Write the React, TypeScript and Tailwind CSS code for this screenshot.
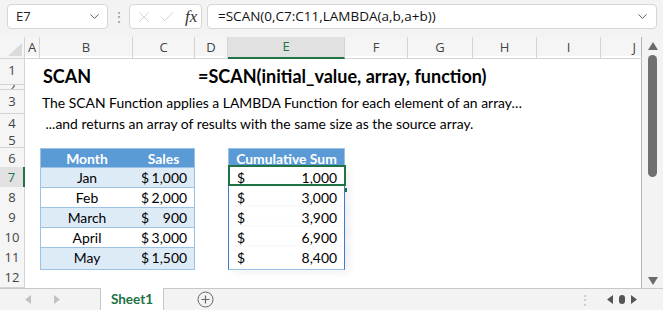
import React from "react";
import { ChevronDown, X, Check } from "lucide-react";

const cols =
  "grid grid-cols-[25px_15px_93px_62px_33px_117px_63px_65px_64px_64px_41px]";

const cellFont = "font-['Lato',_sans-serif] text-[13.9px] text-black";
const uiFont = "font-['Open_Sans',_sans-serif]";

const salesRows = [
  { n: 7, month: "Jan", sales: "1,000", sum: "1,000", band: true },
  { n: 8, month: "Feb", sales: "2,000", sum: "3,000", band: false },
  { n: 9, month: "March", sales: "900", sum: "3,900", band: true },
  { n: 10, month: "April", sales: "3,000", sum: "6,900", band: false },
  { n: 11, month: "May", sales: "1,500", sum: "8,400", band: true },
];

const RowHeader = ({ n, active }: { n: number; active?: boolean }) => (
  <div
    className={
      active
        ? `${uiFont} flex items-center justify-center border-b border-[#d4d4d4] border-r-2 border-r-[#217346] bg-[#e1e1e1] text-[13px] text-[#217346] leading-none overflow-hidden`
        : `${uiFont} flex items-center justify-center border-b border-r border-[#d4d4d4] bg-[#f5f5f5] text-[13px] text-[#444] leading-none overflow-hidden`
    }
  >
    {n}
  </div>
);

const FormulaBar = () => (
  <div className="flex h-[37px] items-start pt-[4px] bg-[#f3f3f3]">
    <div className="ml-[7px] flex h-[25px] w-[101px] items-center justify-between rounded-[4px] border border-[#d6d6d6] bg-white pl-[8px] pr-[5px]">
      <span className={`${uiFont} text-[13px] text-[#222]`}>E7</span>
      <ChevronDown size={15} strokeWidth={1.5} className="text-[#555]" />
    </div>
    <div className="flex h-[25px] w-[21px] items-center justify-center text-[#999] text-[14px]">
      ⋮
    </div>
    <div className="flex h-[25px] w-[73px] items-center rounded-[4px] border border-[#d6d6d6] bg-white pl-[5px]">
      <X size={18} strokeWidth={1} className="text-[#c4c4c4]" />
      <Check size={18} strokeWidth={1} className="ml-[5px] text-[#c4c4c4]" />
      <span className="ml-[9px] font-['Liberation_Serif',_serif] italic text-[17px] text-[#333] leading-none">
        fx
      </span>
    </div>
    <div className="ml-[5px] flex h-[25px] w-[450px] items-center justify-between rounded-[4px] border border-[#d6d6d6] bg-white pl-[10px] pr-[6px]">
      <span className={`${uiFont} text-[13.5px] text-[#111]`}>
        =SCAN(0,C7:C11,LAMBDA(a,b,a+b))
      </span>
      <ChevronDown size={15} strokeWidth={1.5} className="text-[#555]" />
    </div>
  </div>
);

const ColumnHeaders = () => {
  const letters = ["A", "B", "C", "D", "E", "F", "G", "H", "I", "J"];
  return (
    <div className={`${cols} h-[19px] bg-[#f5f5f5]`}>
      <div className="relative border-b border-r border-[#d4d4d4]">
        <svg className="absolute bottom-[2px] right-[2px]" width="14" height="13">
          <polygon points="14,0 14,13 0,13" fill="#dadada" />
        </svg>
      </div>
      {letters.map((l) =>
        l === "E" ? (
          <div
            key={l}
            className={`${uiFont} flex items-center justify-center border-r border-[#d4d4d4] border-b-2 border-b-[#217346] bg-[#e1e1e1] text-[13px] text-[#217346]`}
          >
            {l}
          </div>
        ) : (
          <div
            key={l}
            className={`${uiFont} flex items-center justify-center border-b border-r border-[#d4d4d4] text-[13px] text-[#444] ${
              l === "J" ? "justify-end pr-[6px] border-r-0" : ""
            }`}
          >
            {l}
          </div>
        )
      )}
    </div>
  );
};

const Sheet = () => (
  <div className="w-[642px] bg-white border-r border-[#b5b5b5]">
    <ColumnHeaders />

    {/* row 1 */}
    <div className={`${cols} h-[29px]`}>
      <RowHeader n={1} />
      <div />
      <div className="col-span-2 flex items-end pl-[3px]">
        <span className="font-['Lato',_sans-serif] text-[18px] leading-none font-bold text-black">SCAN</span>
      </div>
      <div className="col-span-7 flex items-end pl-[3px] whitespace-nowrap">
        <span className="font-['Lato',_sans-serif] text-[18px] leading-none font-bold text-black">
          =SCAN(initial_value, array, function)
        </span>
      </div>
    </div>

    {/* row 2 */}
    <div className={`${cols} h-[5px]`}>
      <RowHeader n={2} />
    </div>

    {/* row 3 */}
    <div className={`${cols} h-[24px]`}>
      <RowHeader n={3} />
      <div />
      <div className={`${cellFont} col-span-9 flex items-end whitespace-nowrap pl-[2px]`}>
        The SCAN Function applies a LAMBDA Function for each element of an array…
      </div>
    </div>

    {/* row 4 */}
    <div className={`${cols} h-[20px]`}>
      <RowHeader n={4} />
      <div />
      <div className={`${cellFont} col-span-9 flex items-end whitespace-pre pl-[2px]`}>
        {" ...and returns an array of results with the same size as the source array."}
      </div>
    </div>

    {/* row 5 */}
    <div className={`${cols} h-[14px]`}>
      <RowHeader n={5} />
    </div>

    {/* row 6: table headers */}
    <div className={`${cols} h-[19px]`}>
      <RowHeader n={6} />
      <div />
      <div className={`${cellFont} flex items-center justify-center bg-[#5b9bd5] border-t border-l border-[#9bc2e6] font-bold text-white`}>
        Month
      </div>
      <div className={`${cellFont} flex items-center justify-center bg-[#5b9bd5] border-t border-r border-[#9bc2e6] font-bold text-white`}>
        Sales
      </div>
      <div />
      <div className={`${cellFont} flex items-center justify-center bg-[#5b9bd5] border-t border-x border-[#9bc2e6] font-bold text-white`}>
        Cumulative Sum
      </div>
    </div>

    {salesRows.map((r) => (
      <div key={r.n} className={`${cols} h-[20px]`}>
        <RowHeader n={r.n} active={r.n === 7} />
        <div />
        <div
          className={`${cellFont} flex items-center justify-center border-l border-b border-t border-[#9bc2e6] ${
            r.band ? "bg-[#ddebf7]" : "bg-white"
          }`}
        >
          {r.month}
        </div>
        <div
          className={`${cellFont} flex items-center justify-between border-r border-b border-t border-[#9bc2e6] pl-[8px] pr-[7px] ${
            r.band ? "bg-[#ddebf7]" : "bg-white"
          }`}
        >
          <span>$</span>
          <span>{r.sales}</span>
        </div>
        <div />
        <div
          className={`${cellFont} relative flex items-center justify-between border-x border-x-[#3d7bd0] border-b border-b-[#9bc2e6] bg-white pl-[8px] pr-[7px] shadow-[4px_2px_8px_rgba(0,0,0,0.07)] ${
            r.n === 11 ? "border-b-[#3d7bd0]" : ""
          }`}
        >
          <span>$</span>
          <span>{r.sum}</span>
          {r.n === 7 && (
            <>
              <div className="absolute -left-[1px] -top-[2px] h-[21px] w-[118px] border-2 border-[#217346]" />
              <div className="absolute -right-[4px] bottom-[-4px] h-[6px] w-[6px] border border-white bg-[#217346]" />
            </>
          )}
        </div>
      </div>
    ))}

    {/* row 12 */}
    <div className={`${cols} h-[21px]`}>
      <RowHeader n={12} />
    </div>
  </div>
);

const Scrollbar = () => (
  <div className="flex w-[21px] flex-col items-center bg-[#f3f3f3] pt-[4px]">
    <svg width="10" height="8" className="mt-[1px]">
      <polygon points="5,0 10,8 0,8" fill="#6b6b6b" />
    </svg>
    <div className="mt-[5px] h-[122px] w-[9px] rounded-full bg-[#707070]" />
    <div className="flex-1" />
    <svg width="10" height="8" className="mb-[3px]">
      <polygon points="0,0 10,0 5,8" fill="#6b6b6b" />
    </svg>
  </div>
);

const TabBar = () => (
  <div className="flex h-[22px] items-stretch bg-[#f3f3f3]">
    <div className="flex w-[100px] items-center border-t border-[#c8c8c8]">
      <svg width="6" height="9" className="ml-[25px]">
        <polygon points="6,0 6,9 0,4.5" fill="#c2c2c2" />
      </svg>
      <svg width="6" height="9" className="ml-[23px]">
        <polygon points="0,0 0,9 6,4.5" fill="#c2c2c2" />
      </svg>
    </div>
    <div className="flex w-[64px] items-center justify-center border-x border-[#c8c8c8] bg-white">
      <span className="font-['Lato',_sans-serif] text-[13.5px] font-bold text-[#217346]">Sheet1</span>
    </div>
    <div className="flex flex-1 items-center border-t border-[#c8c8c8]">
      <svg width="17" height="17" viewBox="0 0 17 17" className="ml-[33px]">
        <circle cx="8.5" cy="8.5" r="7.5" fill="none" stroke="#666" strokeWidth="1" />
        <path d="M8.5 4.5v8M4.5 8.5h8" stroke="#666" strokeWidth="1.2" />
      </svg>
      <div className="flex-1" />
      <span className="mr-[16px] text-[12px] text-[#bbb]">⋮</span>
      <svg width="34" height="11" viewBox="0 0 34 11" className="mr-[22px]">
        <polygon points="6,1 6,10 0,5.5" fill="#555" />
        <rect x="12" y="1" width="6" height="9" rx="3" fill="#555" />
        <polygon points="24,1 24,10 30,5.5" fill="#555" />
      </svg>
    </div>
  </div>
);

export default function App() {
  return (
    <div className="flex h-[310px] w-[663px] flex-col overflow-hidden bg-[#f3f3f3]">
      <FormulaBar />
      <div className="flex h-[251px]">
        <Sheet />
        <Scrollbar />
      </div>
      <TabBar />
    </div>
  );
}
